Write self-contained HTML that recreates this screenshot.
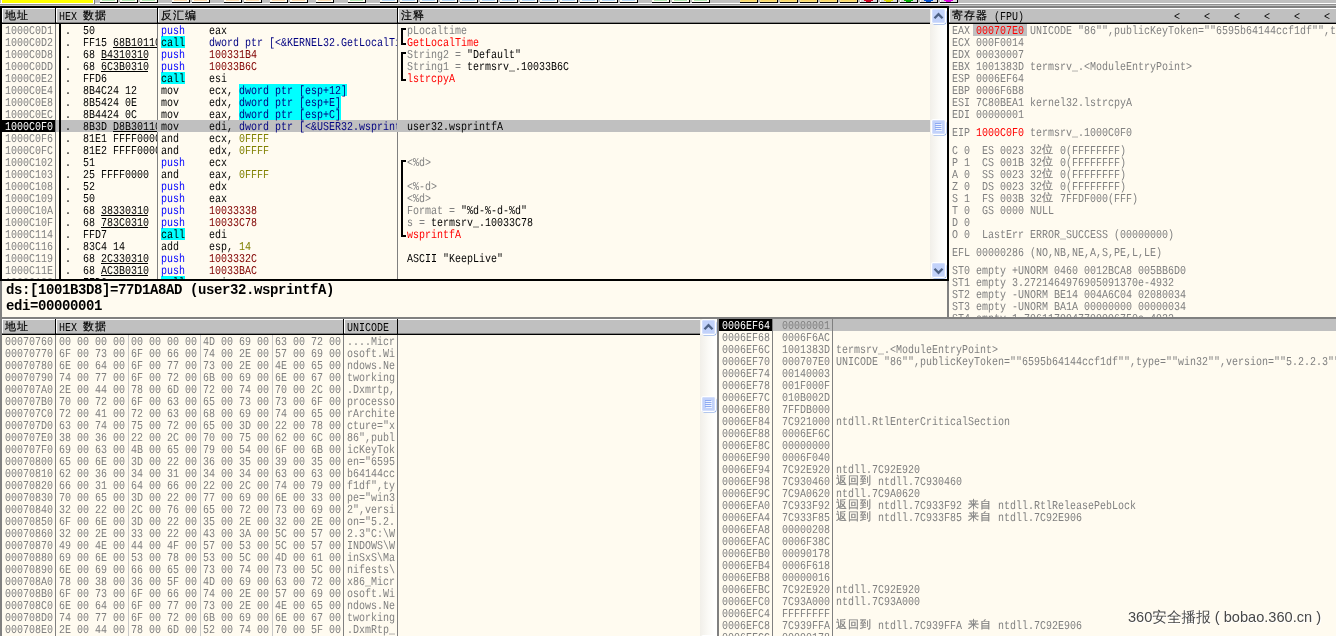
<!DOCTYPE html>
<html><head><meta charset="utf-8"><title>OllyDbg</title><style>
html,body{margin:0;padding:0}
body{width:1336px;height:636px;position:relative;overflow:hidden;background:#c0c0c0}
#r{position:absolute;left:0;top:0;width:1336px;height:636px;overflow:hidden;will-change:transform}
i,b,.p,.q,.sb{position:absolute;display:block;font-style:normal;font-weight:normal}
.p{overflow:hidden}
.q{clip-path:inset(-3px 0 -3px 0)}
b{white-space:pre;line-height:12px;height:12px;font-size:12px}
.t{font-family:"Liberation Mono","WenQuanYi Zen Hei",monospace;text-rendering:geometricPrecision;transform-origin:0 0;transform:scaleX(.83333)}
.c{font-family:"Liberation Mono","WenQuanYi Zen Hei",monospace;font-size:11px;letter-spacing:1px;-webkit-text-stroke:.2px}
.g{color:#808080}.k{color:#000}.b{color:#00f}.n{color:#000080}.m{color:#800000}.o{color:#808000}.r{color:#f00}.w{color:#fff}
.f{font-family:"Liberation Mono",monospace;font-weight:bold;font-size:14px;letter-spacing:-.4px;line-height:16px;height:16px;color:#000}
.wm{font-family:"Liberation Sans","WenQuanYi Zen Hei","Noto Sans CJK SC",sans-serif;font-size:14.6px;line-height:18px;height:18px;color:#484848;text-shadow:1px 1px 0 #fff}
</style></head><body><div id="r">
<i style="left:0px;top:0px;width:1336px;height:3px;background:#C0C0C0"></i>
<i style="left:0px;top:3px;width:1336px;height:1px;background:#fff"></i>
<i style="left:0px;top:4px;width:1336px;height:1px;background:#909090"></i>
<i style="left:0px;top:5px;width:1336px;height:1px;background:#C0C0C0"></i>
<i style="left:1px;top:0px;width:93px;height:4px;background:#fff"></i>
<i style="left:2px;top:0px;width:91px;height:3px;background:#ff0"></i>
<i style="left:94px;top:0px;width:1px;height:4px;background:#808080"></i>
<i style="left:100px;top:0px;width:18px;height:3px;background:#000"></i>
<i style="left:100px;top:0px;width:17px;height:2px;background:#fffdf4"></i>
<i style="left:102px;top:0px;width:13px;height:1px;background:#b4e8b4"></i>
<i style="left:120px;top:0px;width:18px;height:3px;background:#000"></i>
<i style="left:120px;top:0px;width:17px;height:2px;background:#fffdf4"></i>
<i style="left:122px;top:0px;width:13px;height:1px;background:#b4e8b4"></i>
<i style="left:140px;top:0px;width:18px;height:3px;background:#000"></i>
<i style="left:140px;top:0px;width:17px;height:2px;background:#fffdf4"></i>
<i style="left:142px;top:0px;width:13px;height:1px;background:#b4e8b4"></i>
<i style="left:172px;top:0px;width:18px;height:3px;background:#000"></i>
<i style="left:172px;top:0px;width:17px;height:2px;background:#fffdf4"></i>
<i style="left:174px;top:0px;width:13px;height:1px;background:#fbdcb0"></i>
<i style="left:192px;top:0px;width:18px;height:3px;background:#000"></i>
<i style="left:192px;top:0px;width:17px;height:2px;background:#fffdf4"></i>
<i style="left:194px;top:0px;width:13px;height:1px;background:#fbdcb0"></i>
<i style="left:224px;top:0px;width:18px;height:3px;background:#000"></i>
<i style="left:224px;top:0px;width:17px;height:2px;background:#fffdf4"></i>
<i style="left:226px;top:0px;width:13px;height:1px;background:#fbdcb0"></i>
<i style="left:244px;top:0px;width:18px;height:3px;background:#000"></i>
<i style="left:244px;top:0px;width:17px;height:2px;background:#fffdf4"></i>
<i style="left:246px;top:0px;width:13px;height:1px;background:#fbdcb0"></i>
<i style="left:270px;top:0px;width:18px;height:3px;background:#000"></i>
<i style="left:270px;top:0px;width:17px;height:2px;background:#fffdf4"></i>
<i style="left:272px;top:0px;width:13px;height:1px;background:#fbdcb0"></i>
<i style="left:290px;top:0px;width:18px;height:3px;background:#000"></i>
<i style="left:290px;top:0px;width:17px;height:2px;background:#fffdf4"></i>
<i style="left:292px;top:0px;width:13px;height:1px;background:#fbdcb0"></i>
<i style="left:316px;top:0px;width:18px;height:3px;background:#000"></i>
<i style="left:316px;top:0px;width:17px;height:2px;background:#fffdf4"></i>
<i style="left:318px;top:0px;width:13px;height:1px;background:#fbdcb0"></i>
<i style="left:348px;top:0px;width:18px;height:3px;background:#000"></i>
<i style="left:348px;top:0px;width:17px;height:2px;background:#fffdf4"></i>
<i style="left:350px;top:0px;width:13px;height:1px;background:#b4e8b4"></i>
<i style="left:380px;top:0px;width:18px;height:3px;background:#000"></i>
<i style="left:380px;top:0px;width:17px;height:2px;background:#fffdf4"></i>
<i style="left:382px;top:0px;width:13px;height:1px;background:#b8d8f4"></i>
<i style="left:400px;top:0px;width:18px;height:3px;background:#000"></i>
<i style="left:400px;top:0px;width:17px;height:2px;background:#fffdf4"></i>
<i style="left:402px;top:0px;width:13px;height:1px;background:#b8d8f4"></i>
<i style="left:420px;top:0px;width:18px;height:3px;background:#000"></i>
<i style="left:420px;top:0px;width:17px;height:2px;background:#fffdf4"></i>
<i style="left:422px;top:0px;width:13px;height:1px;background:#b8d8f4"></i>
<i style="left:440px;top:0px;width:18px;height:3px;background:#000"></i>
<i style="left:440px;top:0px;width:17px;height:2px;background:#fffdf4"></i>
<i style="left:442px;top:0px;width:13px;height:1px;background:#b8d8f4"></i>
<i style="left:460px;top:0px;width:18px;height:3px;background:#000"></i>
<i style="left:460px;top:0px;width:17px;height:2px;background:#fffdf4"></i>
<i style="left:462px;top:0px;width:13px;height:1px;background:#b8d8f4"></i>
<i style="left:480px;top:0px;width:18px;height:3px;background:#000"></i>
<i style="left:480px;top:0px;width:17px;height:2px;background:#fffdf4"></i>
<i style="left:482px;top:0px;width:13px;height:1px;background:#b8d8f4"></i>
<i style="left:500px;top:0px;width:18px;height:3px;background:#000"></i>
<i style="left:500px;top:0px;width:17px;height:2px;background:#fffdf4"></i>
<i style="left:502px;top:0px;width:13px;height:1px;background:#b8d8f4"></i>
<i style="left:520px;top:0px;width:18px;height:3px;background:#000"></i>
<i style="left:520px;top:0px;width:17px;height:2px;background:#fffdf4"></i>
<i style="left:522px;top:0px;width:13px;height:1px;background:#b8d8f4"></i>
<i style="left:540px;top:0px;width:18px;height:3px;background:#000"></i>
<i style="left:540px;top:0px;width:17px;height:2px;background:#fffdf4"></i>
<i style="left:542px;top:0px;width:13px;height:1px;background:#b8d8f4"></i>
<i style="left:560px;top:0px;width:18px;height:3px;background:#000"></i>
<i style="left:560px;top:0px;width:17px;height:2px;background:#fffdf4"></i>
<i style="left:562px;top:0px;width:13px;height:1px;background:#b8d8f4"></i>
<i style="left:580px;top:0px;width:18px;height:3px;background:#000"></i>
<i style="left:580px;top:0px;width:17px;height:2px;background:#fffdf4"></i>
<i style="left:582px;top:0px;width:13px;height:1px;background:#b8d8f4"></i>
<i style="left:600px;top:0px;width:18px;height:3px;background:#000"></i>
<i style="left:600px;top:0px;width:17px;height:2px;background:#fffdf4"></i>
<i style="left:602px;top:0px;width:13px;height:1px;background:#b8d8f4"></i>
<i style="left:620px;top:0px;width:18px;height:3px;background:#000"></i>
<i style="left:620px;top:0px;width:17px;height:2px;background:#fffdf4"></i>
<i style="left:622px;top:0px;width:13px;height:1px;background:#b8d8f4"></i>
<i style="left:652px;top:0px;width:18px;height:3px;background:#000"></i>
<i style="left:652px;top:0px;width:17px;height:2px;background:#fffdf4"></i>
<i style="left:654px;top:0px;width:13px;height:1px;background:#b4e8b4"></i>
<i style="left:672px;top:0px;width:18px;height:3px;background:#000"></i>
<i style="left:672px;top:0px;width:17px;height:2px;background:#fffdf4"></i>
<i style="left:674px;top:0px;width:13px;height:1px;background:#b4e8b4"></i>
<i style="left:692px;top:0px;width:18px;height:3px;background:#000"></i>
<i style="left:692px;top:0px;width:17px;height:2px;background:#fffdf4"></i>
<i style="left:694px;top:0px;width:13px;height:1px;background:#b4e8b4"></i>
<i style="left:740px;top:0px;width:18px;height:3px;background:#000"></i>
<i style="left:740px;top:0px;width:17px;height:2px;background:#fae28a"></i>
<i style="left:741px;top:0px;width:15px;height:1px;background:#f8d868"></i>
<i style="left:760px;top:0px;width:18px;height:3px;background:#000"></i>
<i style="left:760px;top:0px;width:17px;height:2px;background:#fae28a"></i>
<i style="left:761px;top:0px;width:15px;height:1px;background:#f8d868"></i>
<i style="left:780px;top:0px;width:18px;height:3px;background:#000"></i>
<i style="left:780px;top:0px;width:17px;height:2px;background:#fae28a"></i>
<i style="left:781px;top:0px;width:15px;height:1px;background:#f8d868"></i>
<i style="left:800px;top:0px;width:18px;height:3px;background:#000"></i>
<i style="left:800px;top:0px;width:17px;height:2px;background:#fae28a"></i>
<i style="left:801px;top:0px;width:15px;height:1px;background:#f8d868"></i>
<i style="left:820px;top:0px;width:18px;height:3px;background:#000"></i>
<i style="left:820px;top:0px;width:17px;height:2px;background:#fae28a"></i>
<i style="left:821px;top:0px;width:15px;height:1px;background:#f8d868"></i>
<i style="left:840px;top:0px;width:18px;height:3px;background:#000"></i>
<i style="left:840px;top:0px;width:17px;height:2px;background:#fae28a"></i>
<i style="left:841px;top:0px;width:15px;height:1px;background:#f8d868"></i>
<i style="left:860px;top:0px;width:18px;height:3px;background:#000"></i>
<i style="left:860px;top:0px;width:17px;height:2px;background:#dcdcdc"></i>
<i style="left:860px;top:0px;width:1px;height:2px;background:#fff"></i>
<i style="left:864px;top:0px;width:9px;height:1px;background:#d00020"></i>
<i style="left:866px;top:1px;width:5px;height:1px;background:#d00020"></i>
<i style="left:880px;top:0px;width:18px;height:3px;background:#000"></i>
<i style="left:880px;top:0px;width:17px;height:2px;background:#dcdcdc"></i>
<i style="left:880px;top:0px;width:1px;height:2px;background:#fff"></i>
<i style="left:884px;top:0px;width:9px;height:1px;background:#d8d800"></i>
<i style="left:886px;top:1px;width:5px;height:1px;background:#d8d800"></i>
<i style="left:900px;top:0px;width:18px;height:3px;background:#000"></i>
<i style="left:900px;top:0px;width:17px;height:2px;background:#dcdcdc"></i>
<i style="left:900px;top:0px;width:1px;height:2px;background:#fff"></i>
<i style="left:904px;top:0px;width:9px;height:1px;background:#00b000"></i>
<i style="left:906px;top:1px;width:5px;height:1px;background:#00b000"></i>
<i style="left:920px;top:0px;width:18px;height:3px;background:#000"></i>
<i style="left:920px;top:0px;width:17px;height:2px;background:#dcdcdc"></i>
<i style="left:920px;top:0px;width:1px;height:2px;background:#fff"></i>
<i style="left:924px;top:0px;width:9px;height:1px;background:#0050d0"></i>
<i style="left:926px;top:1px;width:5px;height:1px;background:#0050d0"></i>
<i style="left:940px;top:0px;width:18px;height:3px;background:#000"></i>
<i style="left:940px;top:0px;width:17px;height:2px;background:#dcdcdc"></i>
<i style="left:940px;top:0px;width:1px;height:2px;background:#fff"></i>
<i style="left:944px;top:0px;width:9px;height:1px;background:#e000e0"></i>
<i style="left:946px;top:1px;width:5px;height:1px;background:#e000e0"></i>
<i style="left:0px;top:6px;width:949px;height:275px;background:#000"></i>
<i style="left:2px;top:8px;width:945px;height:271px;background:#FFFBF0"></i>
<i style="left:2px;top:8px;width:928px;height:15px;background:#C0C0C0"></i>
<i style="left:2px;top:8px;width:928px;height:1px;background:#fff"></i>
<i style="left:2px;top:22px;width:928px;height:1px;background:#808080"></i>
<i style="left:2px;top:23px;width:928px;height:1px;background:#000"></i>
<i style="left:2px;top:9px;width:1px;height:13px;background:#fff"></i>
<i style="left:55px;top:8px;width:1px;height:15px;background:#000"></i>
<b class="c k" style="left:5px;top:10px">地址</b>
<i style="left:56px;top:9px;width:1px;height:13px;background:#fff"></i>
<i style="left:157px;top:8px;width:1px;height:15px;background:#000"></i>
<b class="t k" style="left:58.5px;top:11px">HEX</b>
<b class="c k" style="left:83px;top:10px">数据</b>
<i style="left:158px;top:9px;width:1px;height:13px;background:#fff"></i>
<i style="left:397px;top:8px;width:1px;height:15px;background:#000"></i>
<b class="c k" style="left:161px;top:10px">反汇编</b>
<i style="left:398px;top:9px;width:1px;height:13px;background:#fff"></i>
<b class="c k" style="left:401px;top:10px">注释</b>
<i style="left:55px;top:24px;width:1px;height:255px;background:#808080"></i>
<i style="left:157px;top:24px;width:1px;height:255px;background:#808080"></i>
<i style="left:397px;top:24px;width:1px;height:255px;background:#808080"></i>
<i style="left:59px;top:24px;width:2px;height:255px;background:#000"></i>
<i style="left:930px;top:8px;width:17px;height:1px;background:#fff"></i>
<i style="left:930px;top:8px;width:17px;height:271px;background:;background:linear-gradient(90deg,#f1efe9,#fbfaf6 50%,#fff 85%)"></i>
<svg class="sb" style="left:931px;top:8px" width="17" height="18" viewBox="0 0 17 18"><rect x="1" y="1.6" width="14.4" height="15" rx="2.5" fill="#6f97e6"/><rect x="0" y="0" width="15" height="16" rx="2.5" fill="#fff"/><rect x="1" y="1" width="13" height="14" rx="2" fill="#c2d2fa"/><rect x="1.5" y="1.5" width="12" height="13" rx="1.5" fill="none" stroke="#d3defc" stroke-width="1"/><polyline points="3.5,10.2 7.5,6.2 11.5,10.2" fill="none" stroke="#4d6185" stroke-width="2.3"/></svg>
<svg class="sb" style="left:931px;top:262px" width="17" height="18" viewBox="0 0 17 18"><rect x="1" y="1.6" width="14.4" height="15" rx="2.5" fill="#6f97e6"/><rect x="0" y="0" width="15" height="16" rx="2.5" fill="#fff"/><rect x="1" y="1" width="13" height="14" rx="2" fill="#c2d2fa"/><rect x="1.5" y="1.5" width="12" height="13" rx="1.5" fill="none" stroke="#d3defc" stroke-width="1"/><polyline points="3.5,6.8 7.5,10.8 11.5,6.8" fill="none" stroke="#4d6185" stroke-width="2.3"/></svg>
<svg class="sb" style="left:931px;top:119px" width="17" height="18" viewBox="0 0 17 18"><rect x="1" y="1.6" width="14.4" height="15" rx="2.5" fill="#6f97e6"/><rect x="0" y="0" width="15" height="16" rx="2.5" fill="#fff"/><rect x="1" y="1" width="13" height="14" rx="2" fill="#c2d2fa"/><rect x="1.5" y="1.5" width="12" height="13" rx="1.5" fill="none" stroke="#d3defc" stroke-width="1"/><path d="M4 4.5h6M4 6.5h6M4 8.5h6M4 10.5h6" stroke="#8eaaf2"/><path d="M5 5.5h6M5 7.5h6M5 9.5h6M5 11.5h6" stroke="#eef3fe"/></svg>
<div class="p" style="left:2px;top:24px;width:928px;height:255px">
<i style="left:399px;top:4px;width:2px;height:8px;background:#000"></i>
<i style="left:399px;top:4px;width:5px;height:2px;background:#000"></i>
<i style="left:111px;top:23px;width:44px;height:1px;background:#000"></i>
<i style="left:159px;top:12px;width:24px;height:12px;background:#0ff"></i>
<i style="left:399px;top:12px;width:2px;height:9px;background:#000"></i>
<i style="left:399px;top:19px;width:5px;height:2px;background:#000"></i>
<i style="left:99px;top:35px;width:47px;height:1px;background:#000"></i>
<i style="left:399px;top:28px;width:2px;height:8px;background:#000"></i>
<i style="left:399px;top:28px;width:5px;height:2px;background:#000"></i>
<i style="left:99px;top:47px;width:47px;height:1px;background:#000"></i>
<i style="left:399px;top:36px;width:2px;height:12px;background:#000"></i>
<i style="left:159px;top:48px;width:24px;height:12px;background:#0ff"></i>
<i style="left:399px;top:48px;width:2px;height:9px;background:#000"></i>
<i style="left:399px;top:55px;width:5px;height:2px;background:#000"></i>
<i style="left:237px;top:60px;width:108px;height:12px;background:#0ff"></i>
<i style="left:237px;top:72px;width:102px;height:12px;background:#0ff"></i>
<i style="left:237px;top:84px;width:102px;height:12px;background:#0ff"></i>
<i style="left:59px;top:96px;width:869px;height:12px;background:#C0C0C0"></i>
<i style="left:54px;top:96px;width:3px;height:12px;background:#C0C0C0"></i>
<i style="left:0px;top:96px;width:53px;height:12px;background:#000"></i>
<i style="left:111px;top:107px;width:44px;height:1px;background:#000"></i>
<i style="left:399px;top:136px;width:2px;height:8px;background:#000"></i>
<i style="left:399px;top:136px;width:5px;height:2px;background:#000"></i>
<i style="left:399px;top:144px;width:2px;height:12px;background:#000"></i>
<i style="left:399px;top:156px;width:2px;height:12px;background:#000"></i>
<i style="left:399px;top:168px;width:2px;height:12px;background:#000"></i>
<i style="left:99px;top:191px;width:47px;height:1px;background:#000"></i>
<i style="left:399px;top:180px;width:2px;height:12px;background:#000"></i>
<i style="left:99px;top:203px;width:47px;height:1px;background:#000"></i>
<i style="left:399px;top:192px;width:2px;height:12px;background:#000"></i>
<i style="left:159px;top:204px;width:24px;height:12px;background:#0ff"></i>
<i style="left:399px;top:204px;width:2px;height:9px;background:#000"></i>
<i style="left:399px;top:211px;width:5px;height:2px;background:#000"></i>
<i style="left:99px;top:239px;width:47px;height:1px;background:#000"></i>
<i style="left:99px;top:251px;width:47px;height:1px;background:#000"></i>
<i style="left:159px;top:252px;width:24px;height:12px;background:#0ff"></i>
<b class="t g" style="left:2.5px;top:1px">1000C0D1</b>
<b class="t k" style="left:62.5px;top:1px">.</b>
<div class="q" style="left:81px;top:0px;width:74px;height:12px">
<b class="t k" style="left:-0.5px;top:1px">50</b>
</div>
<b class="t b" style="left:158.5px;top:1px">push</b>
<div class="q" style="left:207px;top:0px;width:188px;height:12px">
<b class="t k" style="left:-0.5px;top:1px">eax</b>
</div>
<b class="t g" style="left:404.5px;top:1px">pLocaltime</b>
<b class="t g" style="left:2.5px;top:13px">1000C0D2</b>
<b class="t k" style="left:62.5px;top:13px">.</b>
<div class="q" style="left:81px;top:12px;width:74px;height:12px">
<b class="t k" style="left:-0.5px;top:1px">FF15</b>
<b class="t k" style="left:29.5px;top:1px">68B10110</b>
</div>
<b class="t k" style="left:158.5px;top:13px">call</b>
<div class="q" style="left:207px;top:12px;width:188px;height:12px">
<b class="t n" style="left:-0.5px;top:1px">dword ptr [&lt;&amp;KERNEL32.GetLocalTi</b>
</div>
<b class="t r" style="left:404.5px;top:13px">GetLocalTime</b>
<b class="t g" style="left:2.5px;top:25px">1000C0D8</b>
<b class="t k" style="left:62.5px;top:25px">.</b>
<div class="q" style="left:81px;top:24px;width:74px;height:12px">
<b class="t k" style="left:-0.5px;top:1px">68</b>
<b class="t k" style="left:17.5px;top:1px">B4310310</b>
</div>
<b class="t b" style="left:158.5px;top:25px">push</b>
<div class="q" style="left:207px;top:24px;width:188px;height:12px">
<b class="t m" style="left:-0.5px;top:1px">100331B4</b>
</div>
<b class="t g" style="left:404.5px;top:25px">String2 =</b>
<b class="t k" style="left:464.5px;top:25px">"Default"</b>
<b class="t g" style="left:2.5px;top:37px">1000C0DD</b>
<b class="t k" style="left:62.5px;top:37px">.</b>
<div class="q" style="left:81px;top:36px;width:74px;height:12px">
<b class="t k" style="left:-0.5px;top:1px">68</b>
<b class="t k" style="left:17.5px;top:1px">6C3B0310</b>
</div>
<b class="t b" style="left:158.5px;top:37px">push</b>
<div class="q" style="left:207px;top:36px;width:188px;height:12px">
<b class="t m" style="left:-0.5px;top:1px">10033B6C</b>
</div>
<b class="t g" style="left:404.5px;top:37px">String1 =</b>
<b class="t k" style="left:464.5px;top:37px">termsrv_.10033B6C</b>
<b class="t g" style="left:2.5px;top:49px">1000C0E2</b>
<b class="t k" style="left:62.5px;top:49px">.</b>
<div class="q" style="left:81px;top:48px;width:74px;height:12px">
<b class="t k" style="left:-0.5px;top:1px">FFD6</b>
</div>
<b class="t k" style="left:158.5px;top:49px">call</b>
<div class="q" style="left:207px;top:48px;width:188px;height:12px">
<b class="t k" style="left:-0.5px;top:1px">esi</b>
</div>
<b class="t r" style="left:404.5px;top:49px">lstrcpyA</b>
<b class="t g" style="left:2.5px;top:61px">1000C0E4</b>
<b class="t k" style="left:62.5px;top:61px">.</b>
<div class="q" style="left:81px;top:60px;width:74px;height:12px">
<b class="t k" style="left:-0.5px;top:1px">8B4C24 12</b>
</div>
<b class="t k" style="left:158.5px;top:61px">mov</b>
<div class="q" style="left:207px;top:60px;width:188px;height:12px">
<b class="t k" style="left:-0.5px;top:1px">ecx,</b>
<b class="t n" style="left:29.5px;top:1px">dword ptr [esp+12]</b>
</div>
<b class="t g" style="left:2.5px;top:73px">1000C0E8</b>
<b class="t k" style="left:62.5px;top:73px">.</b>
<div class="q" style="left:81px;top:72px;width:74px;height:12px">
<b class="t k" style="left:-0.5px;top:1px">8B5424 0E</b>
</div>
<b class="t k" style="left:158.5px;top:73px">mov</b>
<div class="q" style="left:207px;top:72px;width:188px;height:12px">
<b class="t k" style="left:-0.5px;top:1px">edx,</b>
<b class="t n" style="left:29.5px;top:1px">dword ptr [esp+E]</b>
</div>
<b class="t g" style="left:2.5px;top:85px">1000C0EC</b>
<b class="t k" style="left:62.5px;top:85px">.</b>
<div class="q" style="left:81px;top:84px;width:74px;height:12px">
<b class="t k" style="left:-0.5px;top:1px">8B4424 0C</b>
</div>
<b class="t k" style="left:158.5px;top:85px">mov</b>
<div class="q" style="left:207px;top:84px;width:188px;height:12px">
<b class="t k" style="left:-0.5px;top:1px">eax,</b>
<b class="t n" style="left:29.5px;top:1px">dword ptr [esp+C]</b>
</div>
<b class="t w" style="left:2.5px;top:97px">1000C0F0</b>
<b class="t k" style="left:62.5px;top:97px">.</b>
<div class="q" style="left:81px;top:96px;width:74px;height:12px">
<b class="t k" style="left:-0.5px;top:1px">8B3D</b>
<b class="t k" style="left:29.5px;top:1px">D8B30110</b>
</div>
<b class="t k" style="left:158.5px;top:97px">mov</b>
<div class="q" style="left:207px;top:96px;width:188px;height:12px">
<b class="t k" style="left:-0.5px;top:1px">edi,</b>
<b class="t n" style="left:29.5px;top:1px">dword ptr [&lt;&amp;USER32.wsprintf</b>
</div>
<b class="t k" style="left:404.5px;top:97px">user32.wsprintfA</b>
<b class="t g" style="left:2.5px;top:109px">1000C0F6</b>
<b class="t k" style="left:62.5px;top:109px">.</b>
<div class="q" style="left:81px;top:108px;width:74px;height:12px">
<b class="t k" style="left:-0.5px;top:1px">81E1 FFFF0000</b>
</div>
<b class="t k" style="left:158.5px;top:109px">and</b>
<div class="q" style="left:207px;top:108px;width:188px;height:12px">
<b class="t k" style="left:-0.5px;top:1px">ecx,</b>
<b class="t o" style="left:29.5px;top:1px">0FFFF</b>
</div>
<b class="t g" style="left:2.5px;top:121px">1000C0FC</b>
<b class="t k" style="left:62.5px;top:121px">.</b>
<div class="q" style="left:81px;top:120px;width:74px;height:12px">
<b class="t k" style="left:-0.5px;top:1px">81E2 FFFF0000</b>
</div>
<b class="t k" style="left:158.5px;top:121px">and</b>
<div class="q" style="left:207px;top:120px;width:188px;height:12px">
<b class="t k" style="left:-0.5px;top:1px">edx,</b>
<b class="t o" style="left:29.5px;top:1px">0FFFF</b>
</div>
<b class="t g" style="left:2.5px;top:133px">1000C102</b>
<b class="t k" style="left:62.5px;top:133px">.</b>
<div class="q" style="left:81px;top:132px;width:74px;height:12px">
<b class="t k" style="left:-0.5px;top:1px">51</b>
</div>
<b class="t b" style="left:158.5px;top:133px">push</b>
<div class="q" style="left:207px;top:132px;width:188px;height:12px">
<b class="t k" style="left:-0.5px;top:1px">ecx</b>
</div>
<b class="t g" style="left:404.5px;top:133px">&lt;%d&gt;</b>
<b class="t g" style="left:2.5px;top:145px">1000C103</b>
<b class="t k" style="left:62.5px;top:145px">.</b>
<div class="q" style="left:81px;top:144px;width:74px;height:12px">
<b class="t k" style="left:-0.5px;top:1px">25 FFFF0000</b>
</div>
<b class="t k" style="left:158.5px;top:145px">and</b>
<div class="q" style="left:207px;top:144px;width:188px;height:12px">
<b class="t k" style="left:-0.5px;top:1px">eax,</b>
<b class="t o" style="left:29.5px;top:1px">0FFFF</b>
</div>
<b class="t g" style="left:2.5px;top:157px">1000C108</b>
<b class="t k" style="left:62.5px;top:157px">.</b>
<div class="q" style="left:81px;top:156px;width:74px;height:12px">
<b class="t k" style="left:-0.5px;top:1px">52</b>
</div>
<b class="t b" style="left:158.5px;top:157px">push</b>
<div class="q" style="left:207px;top:156px;width:188px;height:12px">
<b class="t k" style="left:-0.5px;top:1px">edx</b>
</div>
<b class="t g" style="left:404.5px;top:157px">&lt;%-d&gt;</b>
<b class="t g" style="left:2.5px;top:169px">1000C109</b>
<b class="t k" style="left:62.5px;top:169px">.</b>
<div class="q" style="left:81px;top:168px;width:74px;height:12px">
<b class="t k" style="left:-0.5px;top:1px">50</b>
</div>
<b class="t b" style="left:158.5px;top:169px">push</b>
<div class="q" style="left:207px;top:168px;width:188px;height:12px">
<b class="t k" style="left:-0.5px;top:1px">eax</b>
</div>
<b class="t g" style="left:404.5px;top:169px">&lt;%d&gt;</b>
<b class="t g" style="left:2.5px;top:181px">1000C10A</b>
<b class="t k" style="left:62.5px;top:181px">.</b>
<div class="q" style="left:81px;top:180px;width:74px;height:12px">
<b class="t k" style="left:-0.5px;top:1px">68</b>
<b class="t k" style="left:17.5px;top:1px">38330310</b>
</div>
<b class="t b" style="left:158.5px;top:181px">push</b>
<div class="q" style="left:207px;top:180px;width:188px;height:12px">
<b class="t m" style="left:-0.5px;top:1px">10033338</b>
</div>
<b class="t g" style="left:404.5px;top:181px">Format =</b>
<b class="t k" style="left:458.5px;top:181px">"%d-%-d-%d"</b>
<b class="t g" style="left:2.5px;top:193px">1000C10F</b>
<b class="t k" style="left:62.5px;top:193px">.</b>
<div class="q" style="left:81px;top:192px;width:74px;height:12px">
<b class="t k" style="left:-0.5px;top:1px">68</b>
<b class="t k" style="left:17.5px;top:1px">783C0310</b>
</div>
<b class="t b" style="left:158.5px;top:193px">push</b>
<div class="q" style="left:207px;top:192px;width:188px;height:12px">
<b class="t m" style="left:-0.5px;top:1px">10033C78</b>
</div>
<b class="t g" style="left:404.5px;top:193px">s =</b>
<b class="t k" style="left:428.5px;top:193px">termsrv_.10033C78</b>
<b class="t g" style="left:2.5px;top:205px">1000C114</b>
<b class="t k" style="left:62.5px;top:205px">.</b>
<div class="q" style="left:81px;top:204px;width:74px;height:12px">
<b class="t k" style="left:-0.5px;top:1px">FFD7</b>
</div>
<b class="t k" style="left:158.5px;top:205px">call</b>
<div class="q" style="left:207px;top:204px;width:188px;height:12px">
<b class="t k" style="left:-0.5px;top:1px">edi</b>
</div>
<b class="t r" style="left:404.5px;top:205px">wsprintfA</b>
<b class="t g" style="left:2.5px;top:217px">1000C116</b>
<b class="t k" style="left:62.5px;top:217px">.</b>
<div class="q" style="left:81px;top:216px;width:74px;height:12px">
<b class="t k" style="left:-0.5px;top:1px">83C4 14</b>
</div>
<b class="t k" style="left:158.5px;top:217px">add</b>
<div class="q" style="left:207px;top:216px;width:188px;height:12px">
<b class="t k" style="left:-0.5px;top:1px">esp,</b>
<b class="t o" style="left:29.5px;top:1px">14</b>
</div>
<b class="t g" style="left:2.5px;top:229px">1000C119</b>
<b class="t k" style="left:62.5px;top:229px">.</b>
<div class="q" style="left:81px;top:228px;width:74px;height:12px">
<b class="t k" style="left:-0.5px;top:1px">68</b>
<b class="t k" style="left:17.5px;top:1px">2C330310</b>
</div>
<b class="t b" style="left:158.5px;top:229px">push</b>
<div class="q" style="left:207px;top:228px;width:188px;height:12px">
<b class="t m" style="left:-0.5px;top:1px">1003332C</b>
</div>
<b class="t k" style="left:404.5px;top:229px">ASCII "KeepLive"</b>
<b class="t g" style="left:2.5px;top:241px">1000C11E</b>
<b class="t k" style="left:62.5px;top:241px">.</b>
<div class="q" style="left:81px;top:240px;width:74px;height:12px">
<b class="t k" style="left:-0.5px;top:1px">68</b>
<b class="t k" style="left:17.5px;top:1px">AC3B0310</b>
</div>
<b class="t b" style="left:158.5px;top:241px">push</b>
<div class="q" style="left:207px;top:240px;width:188px;height:12px">
<b class="t m" style="left:-0.5px;top:1px">10033BAC</b>
</div>
<b class="t g" style="left:2.5px;top:253px">1000C123</b>
<b class="t k" style="left:62.5px;top:253px">.</b>
<div class="q" style="left:81px;top:252px;width:74px;height:12px">
<b class="t k" style="left:-0.5px;top:1px">FFD6</b>
</div>
<b class="t k" style="left:158.5px;top:253px">call</b>
<div class="q" style="left:207px;top:252px;width:188px;height:12px">
<b class="t k" style="left:-0.5px;top:1px">esi</b>
</div>
</div>
<i style="left:0px;top:281px;width:2px;height:355px;background:#808080"></i>
<i style="left:2px;top:281px;width:945px;height:36px;background:#FFFBF0"></i>
<i style="left:947px;top:281px;width:2px;height:36px;background:#808080"></i>
<b class="f" style="left:6px;top:282px">ds:[1001B3D8]=77D1A8AD (user32.wsprintfA)</b>
<b class="f" style="left:6px;top:298px">edi=00000001</b>
<i style="left:0px;top:317px;width:1336px;height:2px;background:#808080"></i>
<i style="left:949px;top:6px;width:387px;height:2px;background:#808080"></i>
<i style="left:949px;top:8px;width:387px;height:15px;background:#C0C0C0"></i>
<i style="left:949px;top:8px;width:387px;height:1px;background:#fff"></i>
<i style="left:949px;top:22px;width:387px;height:1px;background:#808080"></i>
<i style="left:949px;top:23px;width:387px;height:1px;background:#000"></i>
<i style="left:949px;top:9px;width:1px;height:13px;background:#fff"></i>
<b class="c k" style="left:952px;top:10px">寄存器</b>
<b class="t k" style="left:993.5px;top:11px">(FPU)</b>
<b class="t k" style="left:1173.5px;top:11px">&lt;</b>
<b class="t k" style="left:1203.5px;top:11px">&lt;</b>
<b class="t k" style="left:1233.5px;top:11px">&lt;</b>
<b class="t k" style="left:1263.5px;top:11px">&lt;</b>
<b class="t k" style="left:1293.5px;top:11px">&lt;</b>
<b class="t k" style="left:1323.5px;top:11px">&lt;</b>
<i style="left:949px;top:24px;width:387px;height:293px;background:#FFFBF0"></i>
<div class="p" style="left:949px;top:24px;width:387px;height:293px">
<i style="left:24px;top:0px;width:54px;height:12px;background:#C0C0C0"></i>
<b class="t g" style="left:2.5px;top:1px">EAX</b>
<b class="t r" style="left:26.5px;top:1px">000707E0</b>
<b class="t g" style="left:80.5px;top:1px">UNICODE "86"",publicKeyToken=""6595b64144ccf1df"",type=""win32"",version=""5.2.2.3""</b>
<b class="t g" style="left:2.5px;top:13px">ECX 000F0014</b>
<b class="t g" style="left:2.5px;top:25px">EDX 00030007</b>
<b class="t g" style="left:2.5px;top:37px">EBX 1001383D termsrv_.&lt;ModuleEntryPoint&gt;</b>
<b class="t g" style="left:2.5px;top:49px">ESP 0006EF64</b>
<b class="t g" style="left:2.5px;top:61px">EBP 0006F6B8</b>
<b class="t g" style="left:2.5px;top:73px">ESI 7C80BEA1 kernel32.lstrcpyA</b>
<b class="t g" style="left:2.5px;top:85px">EDI 00000001</b>
<b class="t g" style="left:2.5px;top:103px">EIP</b>
<b class="t r" style="left:26.5px;top:103px">1000C0F0</b>
<b class="t g" style="left:80.5px;top:103px">termsrv_.1000C0F0</b>
<b class="t g" style="left:2.5px;top:121px">C 0  ES 0023 32</b>
<b class="c g" style="left:93px;top:120px">位</b>
<b class="t g" style="left:110.5px;top:121px">0(FFFFFFFF)</b>
<b class="t g" style="left:2.5px;top:133px">P 1  CS 001B 32</b>
<b class="c g" style="left:93px;top:132px">位</b>
<b class="t g" style="left:110.5px;top:133px">0(FFFFFFFF)</b>
<b class="t g" style="left:2.5px;top:145px">A 0  SS 0023 32</b>
<b class="c g" style="left:93px;top:144px">位</b>
<b class="t g" style="left:110.5px;top:145px">0(FFFFFFFF)</b>
<b class="t g" style="left:2.5px;top:157px">Z 0  DS 0023 32</b>
<b class="c g" style="left:93px;top:156px">位</b>
<b class="t g" style="left:110.5px;top:157px">0(FFFFFFFF)</b>
<b class="t g" style="left:2.5px;top:169px">S 1  FS 003B 32</b>
<b class="c g" style="left:93px;top:168px">位</b>
<b class="t g" style="left:110.5px;top:169px">7FFDF000(FFF)</b>
<b class="t g" style="left:2.5px;top:181px">T 0  GS 0000 NULL</b>
<b class="t g" style="left:2.5px;top:193px">D 0</b>
<b class="t g" style="left:2.5px;top:205px">O 0  LastErr ERROR_SUCCESS (00000000)</b>
<b class="t g" style="left:2.5px;top:223px">EFL 00000286 (NO,NB,NE,A,S,PE,L,LE)</b>
<b class="t g" style="left:2.5px;top:241px">ST0 empty +UNORM 0460 0012BCA8 005BB6D0</b>
<b class="t g" style="left:2.5px;top:253px">ST1 empty 3.2721464976905091370e-4932</b>
<b class="t g" style="left:2.5px;top:265px">ST2 empty -UNORM BE14 004A6C04 02080034</b>
<b class="t g" style="left:2.5px;top:277px">ST3 empty -UNORM BA1A 00000000 00000034</b>
<b class="t g" style="left:2.5px;top:289px">ST4 empty 1.7961179947799996750e-4932</b>
</div>
<i style="left:2px;top:319px;width:698px;height:317px;background:#FFFBF0"></i>
<i style="left:2px;top:319px;width:698px;height:15px;background:#C0C0C0"></i>
<i style="left:2px;top:319px;width:698px;height:1px;background:#fff"></i>
<i style="left:2px;top:333px;width:698px;height:1px;background:#808080"></i>
<i style="left:2px;top:334px;width:698px;height:1px;background:#000"></i>
<i style="left:2px;top:320px;width:1px;height:13px;background:#fff"></i>
<i style="left:55px;top:319px;width:1px;height:15px;background:#000"></i>
<b class="c k" style="left:5px;top:321px">地址</b>
<i style="left:56px;top:320px;width:1px;height:13px;background:#fff"></i>
<i style="left:343px;top:319px;width:1px;height:15px;background:#000"></i>
<b class="t k" style="left:58.5px;top:322px">HEX</b>
<b class="c k" style="left:83px;top:321px">数据</b>
<i style="left:344px;top:320px;width:1px;height:13px;background:#fff"></i>
<i style="left:397px;top:319px;width:1px;height:15px;background:#000"></i>
<b class="t k" style="left:346.5px;top:322px">UNICODE</b>
<i style="left:55px;top:335px;width:1px;height:301px;background:#808080"></i>
<i style="left:343px;top:335px;width:1px;height:301px;background:#808080"></i>
<i style="left:397px;top:335px;width:1px;height:301px;background:#808080"></i>
<i style="left:128px;top:335px;width:1px;height:301px;background:#c8c8c8"></i>
<i style="left:200px;top:335px;width:1px;height:301px;background:#c8c8c8"></i>
<i style="left:272px;top:335px;width:1px;height:301px;background:#c8c8c8"></i>
<i style="left:700px;top:319px;width:17px;height:333px;background:;background:linear-gradient(90deg,#f1efe9,#fbfaf6 50%,#fff 85%)"></i>
<svg class="sb" style="left:701px;top:319px" width="17" height="18" viewBox="0 0 17 18"><rect x="1" y="1.6" width="14.4" height="15" rx="2.5" fill="#6f97e6"/><rect x="0" y="0" width="15" height="16" rx="2.5" fill="#fff"/><rect x="1" y="1" width="13" height="14" rx="2" fill="#c2d2fa"/><rect x="1.5" y="1.5" width="12" height="13" rx="1.5" fill="none" stroke="#d3defc" stroke-width="1"/><polyline points="3.5,10.2 7.5,6.2 11.5,10.2" fill="none" stroke="#4d6185" stroke-width="2.3"/></svg>
<svg class="sb" style="left:701px;top:635px" width="17" height="18" viewBox="0 0 17 18"><rect x="1" y="1.6" width="14.4" height="15" rx="2.5" fill="#6f97e6"/><rect x="0" y="0" width="15" height="16" rx="2.5" fill="#fff"/><rect x="1" y="1" width="13" height="14" rx="2" fill="#c2d2fa"/><rect x="1.5" y="1.5" width="12" height="13" rx="1.5" fill="none" stroke="#d3defc" stroke-width="1"/><polyline points="3.5,6.8 7.5,10.8 11.5,6.8" fill="none" stroke="#4d6185" stroke-width="2.3"/></svg>
<svg class="sb" style="left:701px;top:396px" width="17" height="18" viewBox="0 0 17 18"><rect x="1" y="1.6" width="14.4" height="15" rx="2.5" fill="#6f97e6"/><rect x="0" y="0" width="15" height="16" rx="2.5" fill="#fff"/><rect x="1" y="1" width="13" height="14" rx="2" fill="#c2d2fa"/><rect x="1.5" y="1.5" width="12" height="13" rx="1.5" fill="none" stroke="#d3defc" stroke-width="1"/><path d="M4 4.5h6M4 6.5h6M4 8.5h6M4 10.5h6" stroke="#8eaaf2"/><path d="M5 5.5h6M5 7.5h6M5 9.5h6M5 11.5h6" stroke="#eef3fe"/></svg>
<i style="left:717px;top:319px;width:2px;height:317px;background:#808080"></i>
<div class="p" style="left:2px;top:335px;width:698px;height:301px">
<b class="t g" style="left:2.5px;top:1px">00070760</b>
<b class="t g" style="left:56.5px;top:1px">00 00 00 00 00 00 00 00 4D 00 69 00 63 00 72 00</b>
<b class="t g" style="left:344.5px;top:1px">....Micr</b>
<b class="t g" style="left:2.5px;top:13px">00070770</b>
<b class="t g" style="left:56.5px;top:13px">6F 00 73 00 6F 00 66 00 74 00 2E 00 57 00 69 00</b>
<b class="t g" style="left:344.5px;top:13px">osoft.Wi</b>
<b class="t g" style="left:2.5px;top:25px">00070780</b>
<b class="t g" style="left:56.5px;top:25px">6E 00 64 00 6F 00 77 00 73 00 2E 00 4E 00 65 00</b>
<b class="t g" style="left:344.5px;top:25px">ndows.Ne</b>
<b class="t g" style="left:2.5px;top:37px">00070790</b>
<b class="t g" style="left:56.5px;top:37px">74 00 77 00 6F 00 72 00 6B 00 69 00 6E 00 67 00</b>
<b class="t g" style="left:344.5px;top:37px">tworking</b>
<b class="t g" style="left:2.5px;top:49px">000707A0</b>
<b class="t g" style="left:56.5px;top:49px">2E 00 44 00 78 00 6D 00 72 00 74 00 70 00 2C 00</b>
<b class="t g" style="left:344.5px;top:49px">.Dxmrtp,</b>
<b class="t g" style="left:2.5px;top:61px">000707B0</b>
<b class="t g" style="left:56.5px;top:61px">70 00 72 00 6F 00 63 00 65 00 73 00 73 00 6F 00</b>
<b class="t g" style="left:344.5px;top:61px">processo</b>
<b class="t g" style="left:2.5px;top:73px">000707C0</b>
<b class="t g" style="left:56.5px;top:73px">72 00 41 00 72 00 63 00 68 00 69 00 74 00 65 00</b>
<b class="t g" style="left:344.5px;top:73px">rArchite</b>
<b class="t g" style="left:2.5px;top:85px">000707D0</b>
<b class="t g" style="left:56.5px;top:85px">63 00 74 00 75 00 72 00 65 00 3D 00 22 00 78 00</b>
<b class="t g" style="left:344.5px;top:85px">cture="x</b>
<b class="t g" style="left:2.5px;top:97px">000707E0</b>
<b class="t g" style="left:56.5px;top:97px">38 00 36 00 22 00 2C 00 70 00 75 00 62 00 6C 00</b>
<b class="t g" style="left:344.5px;top:97px">86",publ</b>
<b class="t g" style="left:2.5px;top:109px">000707F0</b>
<b class="t g" style="left:56.5px;top:109px">69 00 63 00 4B 00 65 00 79 00 54 00 6F 00 6B 00</b>
<b class="t g" style="left:344.5px;top:109px">icKeyTok</b>
<b class="t g" style="left:2.5px;top:121px">00070800</b>
<b class="t g" style="left:56.5px;top:121px">65 00 6E 00 3D 00 22 00 36 00 35 00 39 00 35 00</b>
<b class="t g" style="left:344.5px;top:121px">en="6595</b>
<b class="t g" style="left:2.5px;top:133px">00070810</b>
<b class="t g" style="left:56.5px;top:133px">62 00 36 00 34 00 31 00 34 00 34 00 63 00 63 00</b>
<b class="t g" style="left:344.5px;top:133px">b64144cc</b>
<b class="t g" style="left:2.5px;top:145px">00070820</b>
<b class="t g" style="left:56.5px;top:145px">66 00 31 00 64 00 66 00 22 00 2C 00 74 00 79 00</b>
<b class="t g" style="left:344.5px;top:145px">f1df",ty</b>
<b class="t g" style="left:2.5px;top:157px">00070830</b>
<b class="t g" style="left:56.5px;top:157px">70 00 65 00 3D 00 22 00 77 00 69 00 6E 00 33 00</b>
<b class="t g" style="left:344.5px;top:157px">pe="win3</b>
<b class="t g" style="left:2.5px;top:169px">00070840</b>
<b class="t g" style="left:56.5px;top:169px">32 00 22 00 2C 00 76 00 65 00 72 00 73 00 69 00</b>
<b class="t g" style="left:344.5px;top:169px">2",versi</b>
<b class="t g" style="left:2.5px;top:181px">00070850</b>
<b class="t g" style="left:56.5px;top:181px">6F 00 6E 00 3D 00 22 00 35 00 2E 00 32 00 2E 00</b>
<b class="t g" style="left:344.5px;top:181px">on="5.2.</b>
<b class="t g" style="left:2.5px;top:193px">00070860</b>
<b class="t g" style="left:56.5px;top:193px">32 00 2E 00 33 00 22 00 43 00 3A 00 5C 00 57 00</b>
<b class="t g" style="left:344.5px;top:193px">2.3"C:\W</b>
<b class="t g" style="left:2.5px;top:205px">00070870</b>
<b class="t g" style="left:56.5px;top:205px">49 00 4E 00 44 00 4F 00 57 00 53 00 5C 00 57 00</b>
<b class="t g" style="left:344.5px;top:205px">INDOWS\W</b>
<b class="t g" style="left:2.5px;top:217px">00070880</b>
<b class="t g" style="left:56.5px;top:217px">69 00 6E 00 53 00 78 00 53 00 5C 00 4D 00 61 00</b>
<b class="t g" style="left:344.5px;top:217px">inSxS\Ma</b>
<b class="t g" style="left:2.5px;top:229px">00070890</b>
<b class="t g" style="left:56.5px;top:229px">6E 00 69 00 66 00 65 00 73 00 74 00 73 00 5C 00</b>
<b class="t g" style="left:344.5px;top:229px">nifests\</b>
<b class="t g" style="left:2.5px;top:241px">000708A0</b>
<b class="t g" style="left:56.5px;top:241px">78 00 38 00 36 00 5F 00 4D 00 69 00 63 00 72 00</b>
<b class="t g" style="left:344.5px;top:241px">x86_Micr</b>
<b class="t g" style="left:2.5px;top:253px">000708B0</b>
<b class="t g" style="left:56.5px;top:253px">6F 00 73 00 6F 00 66 00 74 00 2E 00 57 00 69 00</b>
<b class="t g" style="left:344.5px;top:253px">osoft.Wi</b>
<b class="t g" style="left:2.5px;top:265px">000708C0</b>
<b class="t g" style="left:56.5px;top:265px">6E 00 64 00 6F 00 77 00 73 00 2E 00 4E 00 65 00</b>
<b class="t g" style="left:344.5px;top:265px">ndows.Ne</b>
<b class="t g" style="left:2.5px;top:277px">000708D0</b>
<b class="t g" style="left:56.5px;top:277px">74 00 77 00 6F 00 72 00 6B 00 69 00 6E 00 67 00</b>
<b class="t g" style="left:344.5px;top:277px">tworking</b>
<b class="t g" style="left:2.5px;top:289px">000708E0</b>
<b class="t g" style="left:56.5px;top:289px">2E 00 44 00 78 00 6D 00 52 00 74 00 70 00 5F 00</b>
<b class="t g" style="left:344.5px;top:289px">.DxmRtp_</b>
</div>
<i style="left:719px;top:319px;width:617px;height:317px;background:#FFFBF0"></i>
<i style="left:772px;top:319px;width:1px;height:317px;background:#808080"></i>
<i style="left:832px;top:319px;width:1px;height:317px;background:#808080"></i>
<div class="p" style="left:719px;top:319px;width:617px;height:317px">
<i style="left:54px;top:0px;width:563px;height:12px;background:#C0C0C0"></i>
<i style="left:113px;top:0px;width:1px;height:12px;background:#808080"></i>
<i style="left:0px;top:0px;width:53px;height:12px;background:#000"></i>
<b class="t w" style="left:2.5px;top:1px">0006EF64</b>
<b class="t g" style="left:62.5px;top:1px">00000001</b>
<b class="t g" style="left:2.5px;top:13px">0006EF68</b>
<b class="t g" style="left:62.5px;top:13px">0006F6AC</b>
<b class="t g" style="left:2.5px;top:25px">0006EF6C</b>
<b class="t g" style="left:62.5px;top:25px">1001383D</b>
<b class="t g" style="left:116.5px;top:25px">termsrv_.&lt;ModuleEntryPoint&gt;</b>
<b class="t g" style="left:2.5px;top:37px">0006EF70</b>
<b class="t g" style="left:62.5px;top:37px">000707E0</b>
<b class="t g" style="left:116.5px;top:37px">UNICODE "86"",publicKeyToken=""6595b64144ccf1df"",type=""win32"",version=""5.2.2.3""</b>
<b class="t g" style="left:2.5px;top:49px">0006EF74</b>
<b class="t g" style="left:62.5px;top:49px">00140003</b>
<b class="t g" style="left:2.5px;top:61px">0006EF78</b>
<b class="t g" style="left:62.5px;top:61px">001F000F</b>
<b class="t g" style="left:2.5px;top:73px">0006EF7C</b>
<b class="t g" style="left:62.5px;top:73px">010B002D</b>
<b class="t g" style="left:2.5px;top:85px">0006EF80</b>
<b class="t g" style="left:62.5px;top:85px">7FFDB000</b>
<b class="t g" style="left:2.5px;top:97px">0006EF84</b>
<b class="t g" style="left:62.5px;top:97px">7C921000</b>
<b class="t g" style="left:116.5px;top:97px">ntdll.RtlEnterCriticalSection</b>
<b class="t g" style="left:2.5px;top:109px">0006EF88</b>
<b class="t g" style="left:62.5px;top:109px">0006EF6C</b>
<b class="t g" style="left:2.5px;top:121px">0006EF8C</b>
<b class="t g" style="left:62.5px;top:121px">00000000</b>
<b class="t g" style="left:2.5px;top:133px">0006EF90</b>
<b class="t g" style="left:62.5px;top:133px">0006F040</b>
<b class="t g" style="left:2.5px;top:145px">0006EF94</b>
<b class="t g" style="left:62.5px;top:145px">7C92E920</b>
<b class="t g" style="left:116.5px;top:145px">ntdll.7C92E920</b>
<b class="t g" style="left:2.5px;top:157px">0006EF98</b>
<b class="t g" style="left:62.5px;top:157px">7C930460</b>
<b class="c g" style="left:117px;top:156px">返回到</b>
<b class="t g" style="left:158.5px;top:157px">ntdll.7C930460</b>
<b class="t g" style="left:2.5px;top:169px">0006EF9C</b>
<b class="t g" style="left:62.5px;top:169px">7C9A0620</b>
<b class="t g" style="left:116.5px;top:169px">ntdll.7C9A0620</b>
<b class="t g" style="left:2.5px;top:181px">0006EFA0</b>
<b class="t g" style="left:62.5px;top:181px">7C933F92</b>
<b class="c g" style="left:117px;top:180px">返回到</b>
<b class="t g" style="left:158.5px;top:181px">ntdll.7C933F92</b>
<b class="c g" style="left:249px;top:180px">来自</b>
<b class="t g" style="left:278.5px;top:181px">ntdll.RtlReleasePebLock</b>
<b class="t g" style="left:2.5px;top:193px">0006EFA4</b>
<b class="t g" style="left:62.5px;top:193px">7C933F85</b>
<b class="c g" style="left:117px;top:192px">返回到</b>
<b class="t g" style="left:158.5px;top:193px">ntdll.7C933F85</b>
<b class="c g" style="left:249px;top:192px">来自</b>
<b class="t g" style="left:278.5px;top:193px">ntdll.7C92E906</b>
<b class="t g" style="left:2.5px;top:205px">0006EFA8</b>
<b class="t g" style="left:62.5px;top:205px">00000208</b>
<b class="t g" style="left:2.5px;top:217px">0006EFAC</b>
<b class="t g" style="left:62.5px;top:217px">0006F38C</b>
<b class="t g" style="left:2.5px;top:229px">0006EFB0</b>
<b class="t g" style="left:62.5px;top:229px">00090178</b>
<b class="t g" style="left:2.5px;top:241px">0006EFB4</b>
<b class="t g" style="left:62.5px;top:241px">0006F618</b>
<b class="t g" style="left:2.5px;top:253px">0006EFB8</b>
<b class="t g" style="left:62.5px;top:253px">00000016</b>
<b class="t g" style="left:2.5px;top:265px">0006EFBC</b>
<b class="t g" style="left:62.5px;top:265px">7C92E920</b>
<b class="t g" style="left:116.5px;top:265px">ntdll.7C92E920</b>
<b class="t g" style="left:2.5px;top:277px">0006EFC0</b>
<b class="t g" style="left:62.5px;top:277px">7C93A000</b>
<b class="t g" style="left:116.5px;top:277px">ntdll.7C93A000</b>
<b class="t g" style="left:2.5px;top:289px">0006EFC4</b>
<b class="t g" style="left:62.5px;top:289px">FFFFFFFF</b>
<b class="t g" style="left:2.5px;top:301px">0006EFC8</b>
<b class="t g" style="left:62.5px;top:301px">7C939FFA</b>
<b class="c g" style="left:117px;top:300px">返回到</b>
<b class="t g" style="left:158.5px;top:301px">ntdll.7C939FFA</b>
<b class="c g" style="left:249px;top:300px">来自</b>
<b class="t g" style="left:278.5px;top:301px">ntdll.7C92E906</b>
<b class="t g" style="left:2.5px;top:313px">0006EFCC</b>
<b class="t g" style="left:62.5px;top:313px">00090178</b>
</div>
<b class="wm" style="left:1128px;top:608px">360安全播报 ( bobao.360.cn )</b>
</div></body></html>
